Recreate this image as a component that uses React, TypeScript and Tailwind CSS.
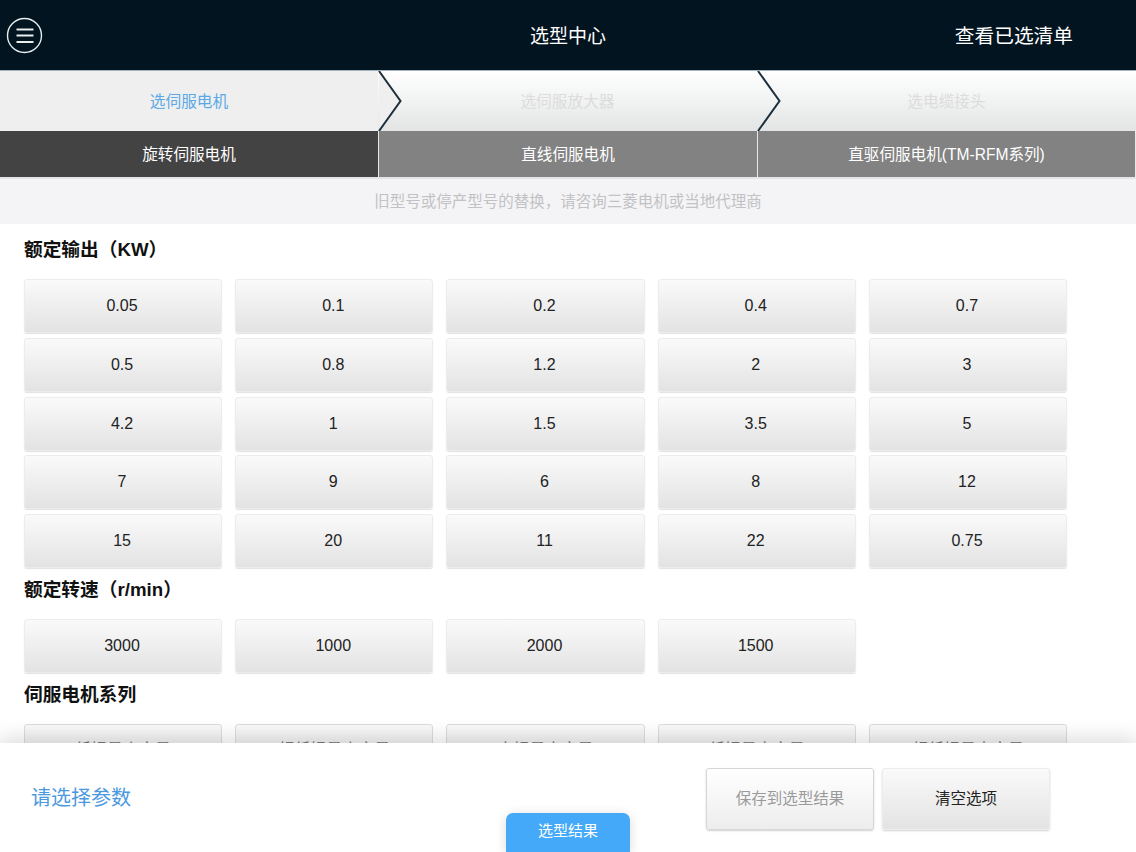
import * as React from "react"

const power = [
  "0.05", "0.1", "0.2", "0.4", "0.7",
  "0.5", "0.8", "1.2", "2", "3",
  "4.2", "1", "1.5", "3.5", "5",
  "7", "9", "6", "8", "12",
  "15", "20", "11", "22", "0.75",
]
const speed = ["3000", "1000", "2000", "1500"]
const series = ["低惯量小容量", "超低惯量小容量", "中惯量中容量", "低惯量中容量", "超低惯量中容量"]

function Option({ label }: { label: string }) {
  return (
    <button className="h-[54px] rounded-[3px] border border-[#ececec] bg-gradient-to-b from-[#fafafa] to-[#e3e3e4] pr-[2px] text-[16px] text-[#222] shadow-[0_1px_1px_rgba(0,0,0,0.12)]">
      {label}
    </button>
  )
}

function Heading({ children }: { children: React.ReactNode }) {
  return <h2 className="text-[18.7px] leading-[26px] font-bold text-[#111]">{children}</h2>
}

function Chevron() {
  return (
    <svg className="absolute top-0 left-full z-10 h-[60px] w-[26px]" viewBox="0 0 26 60" fill="none">
      <path d="M1 0 L22.5 30 L1 60" stroke="#1d2f3a" strokeWidth="2" />
    </svg>
  )
}

export default function App() {
  return (
    <div className="relative flex h-[852px] w-[1136px] flex-col overflow-hidden bg-white font-['Liberation_Sans','Noto_Sans_CJK_SC',sans-serif]">
      <header className="grid h-[71px] grid-cols-3 items-center border-b border-[#9fb4bf] bg-[#02141f] text-white">
        <div className="pl-[6px]">
          <svg className="h-[37px] w-[37px]" viewBox="0 0 37 37" fill="none" stroke="#e8eef0">
            <circle cx="18.5" cy="18.5" r="17" strokeWidth="1.4" />
            <path d="M10.5 12.5h17M10.5 18.5h17M10.5 25h17" strokeWidth="1.8" />
          </svg>
        </div>
        <div className="pt-[4px] text-center text-[19px]">选型中心</div>
        <div className="pt-[4px] pr-[63px] text-right text-[19.7px]">查看已选清单</div>
      </header>

      <div className="grid h-[60px] grid-cols-[378px_379px_379px] text-[15.7px]">
        <div className="relative flex items-center justify-center bg-[#efefef] pt-[2px] text-[#5aa9e6]">
          选伺服电机
          <svg className="absolute top-0 left-full z-10 h-[60px] w-[24px]" viewBox="0 0 24 60">
            <path d="M1 0 L23 30 L1 60Z" fill="#efefef" />
          </svg>
          <Chevron />
        </div>
        <div className="relative flex items-center justify-center bg-gradient-to-b from-white to-[#e3e5e5] pt-[2px] text-[#dcdcdc]">
          选伺服放大器
          <Chevron />
        </div>
        <div className="flex items-center justify-center bg-gradient-to-b from-white to-[#e3e5e5] pt-[2px] text-[#dcdcdc]">
          选电缆接头
        </div>
      </div>

      <nav className="grid h-[48px] grid-cols-[378px_379px_379px] border-b-2 border-[#e4e4e6] bg-[#828282] text-[15.6px] text-white">
        <div className="flex items-center justify-center bg-[#444343] pt-[2px]">旋转伺服电机</div>
        <div className="flex items-center justify-center border-l border-[#e8e8e8] pt-[2px]">直线伺服电机</div>
        <div className="flex items-center justify-center border-x border-[#e8e8e8] pt-[2px]">直驱伺服电机(TM-RFM系列)</div>
      </nav>

      <p className="flex h-[45px] items-center justify-center bg-[#f4f4f6] text-[15.5px] text-[#c2c2c4]">
        旧型号或停产型号的替换，请咨询三菱电机或当地代理商
      </p>

      <main className="flex-1 overflow-hidden pt-[13px] pr-[69px] pl-[24px]">
        <Heading>额定输出（KW）</Heading>
        <div className="mt-[16px] grid grid-cols-5 gap-x-[13.2px] gap-y-[4.75px]">
          {power.map((p, i) => (
            <Option key={i} label={p} />
          ))}
        </div>
        <div className="mt-[9px]">
          <Heading>额定转速（r/min）</Heading>
        </div>
        <div className="mt-[16px] grid grid-cols-5 gap-x-[13.2px]">
          {speed.map((s) => (
            <Option key={s} label={s} />
          ))}
        </div>
        <div className="mt-[9px]">
          <Heading>伺服电机系列</Heading>
        </div>
        <div className="mt-[16px] grid grid-cols-5 gap-x-[13.2px]">
          {series.map((s) => (
            <button
              key={s}
              className="h-[54px] rounded-[3px] border border-[#dcdcdc] bg-gradient-to-b from-[#f9f9f9] to-[#e3e3e4] pb-[3px] text-[16px] text-[#777]"
            >
              {s}
            </button>
          ))}
        </div>
      </main>

      <footer className="relative flex h-[109px] shrink-0 items-start justify-between bg-white pt-[25px] pr-[86px] pl-[31px] shadow-[0_-6px_18px_rgba(0,0,0,0.13)]">
        <span className="mt-[16px] text-[20px] leading-[28px] text-[#4a98e0]">请选择参数</span>
        <div className="flex gap-[8px]">
          <button className="h-[62px] w-[168px] rounded-[3px] border border-[#d6d6d6] bg-gradient-to-b from-white to-[#ededee] text-[15.5px] text-[#9a9a9a] shadow-[0_1px_2px_rgba(0,0,0,0.18)]">
            保存到选型结果
          </button>
          <button className="h-[62px] w-[168px] rounded-[3px] border border-[#ececec] bg-gradient-to-b from-[#fafafa] to-[#e3e3e4] text-[15.5px] text-[#222] shadow-[0_1px_2px_rgba(0,0,0,0.18)]">
            清空选项
          </button>
        </div>
        <button className="absolute bottom-0 left-[506px] h-[39px] w-[124px] rounded-t-[7px] bg-[#44a9f8] pb-[2px] text-[15px] text-white shadow-[0_2px_12px_rgba(0,0,0,0.15)]">
          选型结果
        </button>
      </footer>
    </div>
  )
}
